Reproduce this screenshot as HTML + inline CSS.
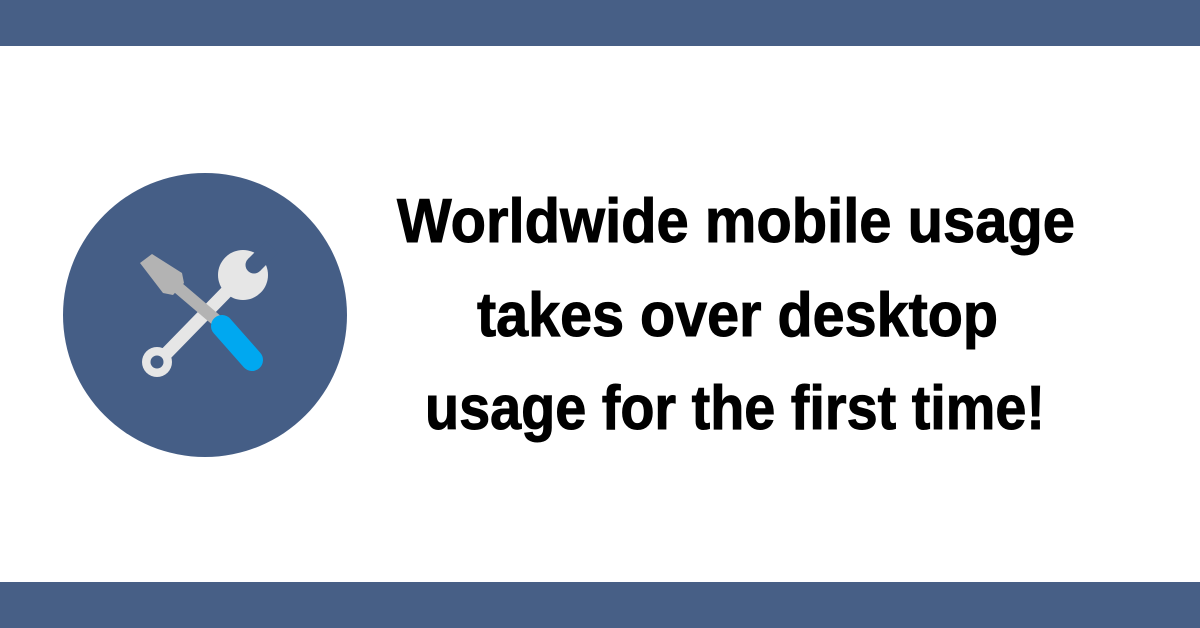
<!DOCTYPE html>
<html><head><meta charset="utf-8"><style>
html,body{margin:0;padding:0;width:1200px;height:628px;overflow:hidden;background:#fff}
</style></head><body>
<svg width="1200" height="628" viewBox="0 0 1200 628" xmlns="http://www.w3.org/2000/svg">
<rect x="0" y="0" width="1200" height="46" fill="#475f86"/>
<rect x="0" y="582" width="1200" height="46" fill="#475f86"/>
<circle cx="205" cy="315" r="142" fill="#455e86"/>
<!-- wrench -->
<line x1="160" y1="360" x2="238" y2="280" stroke="#e6e6e6" stroke-width="13" stroke-linecap="round"/>
<circle cx="157" cy="362" r="15" fill="#e6e6e6"/>
<circle cx="157" cy="362" r="6.5" fill="#455e86"/>
<circle cx="243" cy="275" r="25" fill="#e6e6e6"/>
<circle cx="254" cy="265" r="8.5" fill="#455e86"/>
<polygon points="248,259 260,271 278,253 266,241" fill="#455e86"/>
<!-- screwdriver -->
<polygon points="140,263 152,254 182,273 184,283 173,295 163,293" fill="#b3b3b3"/>
<line x1="175" y1="285" x2="222" y2="325" stroke="#b3b3b3" stroke-width="12"/>
<line x1="222" y1="326" x2="252" y2="360" stroke="#00a8f0" stroke-width="22" stroke-linecap="round"/>
<g font-family="'Liberation Sans',sans-serif" font-weight="bold" font-size="62" fill="#000" stroke="#000" stroke-width="1">
<text x="397" y="242" textLength="678" lengthAdjust="spacingAndGlyphs">Worldwide mobile usage</text>
<text x="477" y="336" textLength="521" lengthAdjust="spacingAndGlyphs">takes over desktop</text>
<text x="425" y="429" textLength="620" lengthAdjust="spacingAndGlyphs">usage for the first time!</text>
</g>
</svg>
</body></html>
